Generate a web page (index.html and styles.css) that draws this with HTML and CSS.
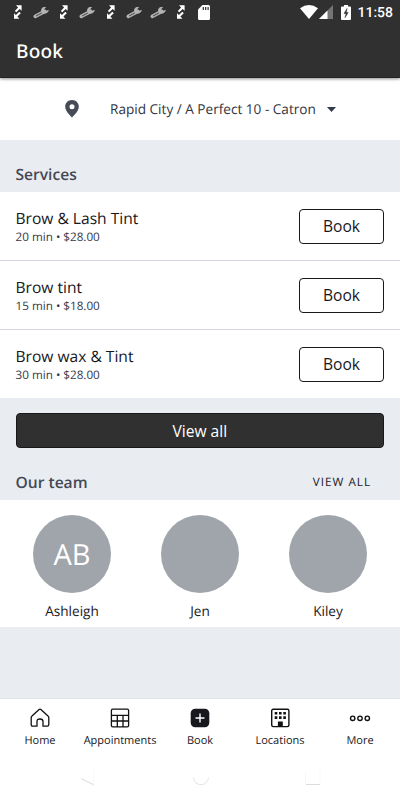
FILE: index.html
```html
<!DOCTYPE html>
<html lang="en">
<head>
<meta charset="utf-8">
<title>Book</title>
<link rel="stylesheet" href="styles.css">
</head>
<body>
<svg class="defs" width="0" height="0" aria-hidden="true">
  <symbol id="sync" viewBox="0 0 12 16">
    <path d="M4 1.2h5.6v5.6L7.700 4.900 4.300 8.300 2.800 6.900 6.100 3.400ZM2 14.800V9.200l1.900 1.900 3.400-3.400 1.500 1.500-3.400 3.400 2 2.200Z" fill="#fff"/>
  </symbol>
  <symbol id="wrench" viewBox="0 0 17 13">
    <path d="M2.300 10.400 11.700 5.300" stroke="#b3b3b3" stroke-width="3.600" stroke-linecap="round"/>
    <path d="M13.200 1 10.600.9C8.500 1.700 7.500 3.600 8.300 5.500c.9 2.100 3.200 2.700 5.100 1.700 1.500-.7 2.400-1.900 2.300-3.400l-2.800 1.100-1.700-1.600Z" fill="#b3b3b3"/>
    <path d="m3 10 5.800-3" stroke="#444" stroke-width="1"/>
  </symbol>
</svg>
<header class="appbar">
  <div class="status">
    <div class="notices">
      <svg class="sync"><use href="#sync"/></svg>
      <svg class="wrench"><use href="#wrench"/></svg>
      <svg class="sync"><use href="#sync"/></svg>
      <svg class="wrench"><use href="#wrench"/></svg>
      <svg class="sync"><use href="#sync"/></svg>
      <svg class="wrench"><use href="#wrench"/></svg>
      <svg class="wrench"><use href="#wrench"/></svg>
      <svg class="sync"><use href="#sync"/></svg>
      <svg class="sd" viewBox="0 0 12 15"><path d="M4.500 0H10.500Q12 0 12 1.500v12Q12 15 10.500 15h-9Q0 15 0 13.500v-9Z" fill="#fff"/><path d="M5.300 2v3M7.700 2v3M10.100 2v3" stroke="#303030" stroke-width="1.200"/></svg>
    </div>
    <div class="system">
      <svg class="wifi" viewBox="0 0 18 14"><path d="M0 3.200Q9-3 18 3.200L9 14Z" fill="#fff"/></svg>
      <svg class="signal" viewBox="0 0 14 14"><path d="M14 0V14H0Z" fill="#757575"/><path d="M8.500 5.500V14H0Z" fill="#fff"/></svg>
      <svg class="battery" viewBox="0 0 10 15"><path d="M3 0h4v1.500h2q1 0 1 1V14q0 1-1 1H1q-1 0-1-1V2.500q0-1 1-1h2Z" fill="#fff"/><path d="M6 3.500 3 8.600h2.100L4 12.700 7.200 7.400H5.300Z" fill="#303030" stroke="#303030" stroke-width=".5"/></svg>
      <span class="time">11:58</span>
    </div>
  </div>
  <h1>Book</h1>
</header>
<main>
  <div class="location">
    <svg class="pin" viewBox="0 0 14 18"><path fill-rule="evenodd" d="M7 0C3 0 .2 2.900.2 6.700.2 11 4.500 14.500 7 17.600 9.500 14.500 13.800 11 13.800 6.700 13.800 2.900 11 0 7 0Zm0 4.200a2.500 2.500 0 1 1 0 5 2.500 2.500 0 0 1 0-5Z" fill="#474b57"/></svg>
    <span class="place">Rapid City / A Perfect 10 - Catron</span>
    <svg class="caret" viewBox="0 0 9 5"><path d="M0 0h9L4.500 5Z" fill="#303b4c"/></svg>
  </div>
  <h2 class="services-title">Services</h2>
  <ul class="services">
    <li><div class="info"><div class="name">Brow &amp; Lash Tint</div><div class="meta">20 min • $28.00</div></div><button>Book</button></li>
    <li><div class="info"><div class="name">Brow tint</div><div class="meta">15 min • $18.00</div></div><button>Book</button></li>
    <li><div class="info"><div class="name">Brow wax &amp; Tint</div><div class="meta">30 min • $28.00</div></div><button>Book</button></li>
  </ul>
  <button class="all">View all</button>
  <div class="team-head"><h2>Our team</h2><a>VIEW ALL</a></div>
  <div class="team">
    <div class="member"><div class="avatar">AB</div><span>Ashleigh</span></div>
    <div class="member"><div class="avatar"></div><span>Jen</span></div>
    <div class="member"><div class="avatar"></div><span>Kiley</span></div>
  </div>
</main>
<nav>
  <a><svg viewBox="0 0 20 20"><path d="M7 18.200H2.800Q1.200 18.200 1.200 16.600V9.700Q1.200 8.700 2 8L8.800 1.700Q10 .7 11.200 1.700L18 8q.8.7.8 1.700v6.900q0 1.600-1.600 1.600H13v-4.700q0-2.500-3-2.500t-3 2.500Z" fill="none" stroke="#111" stroke-width="1.300" stroke-linejoin="round"/></svg><span>Home</span></a>
  <a><svg viewBox="0 0 20 20"><path d="M2.800 1.200h14.400q1.400 0 1.400 1.400v14.800q0 1.400-1.400 1.400H2.800q-1.400 0-1.400-1.400V2.600q0-1.400 1.400-1.400ZM1.400 7.300h17.200M1.400 13h17.200M7.300 7.300v11.500M13 7.300v11.500" fill="none" stroke="#111" stroke-width="1.300"/></svg><span>Appointments</span></a>
  <a><svg viewBox="0 0 20 20"><rect x=".7" y=".7" width="18.600" height="18.600" rx="4.500" fill="#17181d"/><path d="M5.500 10h9M10 5.500v9" stroke="#fff" stroke-width="1.400"/></svg><span>Book</span></a>
  <a><svg viewBox="0 0 20 20"><rect x="1.700" y="1.200" width="17.200" height="17.400" rx="1.500" fill="none" stroke="#111" stroke-width="1.400"/><path d="M4.700 4h2.600v2.600H4.700ZM9 4h2.600v2.600H9ZM13.300 4h2.600v2.600h-2.600ZM4.700 8.300h2.600v2.600H4.700ZM9 8.300h2.600v2.600H9ZM13.300 8.300h2.600v2.600h-2.600ZM7.900 13.500h4.900v5.300H7.900Z" fill="#111"/></svg><span>Locations</span></a>
  <a><svg class="dots" viewBox="0 0 22 20"><g fill="none" stroke="#111" stroke-width="1.400"><circle cx="3.700" cy="10.300" r="2.200"/><circle cx="11" cy="10.300" r="2.200"/><circle cx="18.300" cy="10.300" r="2.200"/></g></svg><span>More</span></a>
</nav>
<footer class="keys">
  <svg viewBox="0 0 16 16"><path d="M1 8.500 13.500 14.700V0" fill="none" stroke="#f8f8f8"/><path d="m1 8.500 12.500 6.200" stroke="#dcdcdc"/></svg>
  <svg viewBox="0 0 16 16"><path d="M.5 7.500q1.200 7 7.500 7.200 6.300-.2 7.500-7.200" fill="none" stroke="#e4e4e4"/></svg>
  <svg viewBox="0 0 16 16"><path d="M.5 1v13.500M15 1v13.500" stroke="#f7f7f7"/><path d="M1 14.500h14" stroke="#dcdcdc"/></svg>
</footer>
</body>
</html>
```

FILE: styles.css
```css
* { box-sizing: border-box; margin: 0; padding: 0; }
body { width: 400px; height: 800px; overflow: hidden; display: flex; flex-direction: column; background: #fff; font-family: "Open Sans", sans-serif; color: #17181c; text-rendering: geometricPrecision; }
svg { display: block; flex: none; }
.defs { position: absolute; }
.appbar { height: 78px; flex: none; background: #303030; border-bottom: 1px solid #242424; box-shadow: 0 1px 3px rgba(0,0,0,.45); z-index: 1; color: #fff; }
.status { height: 24px; display: flex; justify-content: space-between; padding: 0 7px 0 6px; }
.notices { display: grid; grid-template-columns: repeat(9, 23.4px); align-items: center; justify-items: center; }
.sync { width: 12px; height: 16px; }
.wrench { width: 17px; height: 13px; }
.sd { width: 12px; height: 15px; margin-right: 2px; }
.system { display: flex; align-items: center; }
.wifi { width: 18px; height: 14px; margin-right: 1px; }
.signal { width: 14px; height: 14px; margin-right: 8px; }
.battery { width: 10px; height: 15px; margin-right: 6px; }
.time { font: 500 14px/24px Roboto, sans-serif; padding-top: 1px; }
h1 { font: 500 19px/26px "Noto Sans", sans-serif; padding: 14px 16px 0; letter-spacing: .2px; }
.location { height: 62px; display: flex; align-items: center; padding-left: 65px; }
.pin { width: 14px; height: 18px; }
.place { width: 207px; margin: 0 10px 0 31px; padding-bottom: 2px; font-size: 13.600px; color: #303440; white-space: nowrap; }
.caret { width: 9px; height: 5px; }
main { flex: none; height: 620px; background: #e9ecf1; }
.location, .services, .team { background: #fff; }
h2 { font-size: 15.600px; line-height: 22px; font-weight: 600; color: #444854; }
.services-title { height: 52px; padding: 23px 15.500px 0; }
.services { list-style: none; height: 206px; display: grid; grid-template-rows: 69px 69px 68px; }
.services li { display: flex; align-items: center; justify-content: space-between; padding: 0 16px 0 15.500px; border-bottom: 1px solid #d5d8df; }
.services li:last-child { border: 0; }
.info { padding-top: 2px; }
.name { font-size: 15.600px; line-height: 20px; }
.meta { font-size: 11.700px; line-height: 18px; color: #343846; }
button { font: 15.600px/20px "Open Sans", sans-serif; width: 85px; height: 35px; background: #fff; border: 1px solid #17181c; border-radius: 4px; color: #17181c; }
.all { display: block; width: 368.500px; margin: 15px 15.500px 0; background: #303030; border-color: #17181c; color: #fff; }
.team-head { display: flex; justify-content: space-between; height: 52px; padding: 23px 29px 0 15.500px; }
.team-head a { font-size: 11.700px; line-height: 22px; letter-spacing: 1px; }
.team { height: 127px; padding: 15px 8px 0; display: grid; grid-template-columns: repeat(3, 128px); }
.member { display: flex; flex-direction: column; align-items: center; font-size: 13.600px; line-height: 20px; }
.avatar { width: 78px; height: 78px; border-radius: 50%; background: #a0a4ab; color: #fff; font-size: 29px; line-height: 80px; text-align: center; margin-bottom: 8px; }
nav { height: 62px; flex: none; display: grid; grid-template-columns: repeat(5, 80px); border-top: 1px solid #e0e3e8; background: #fff; }
nav a { display: flex; flex-direction: column; align-items: center; font-size: 11px; line-height: 16px; padding-top: 9px; }
nav svg { width: 20px; height: 20px; margin-bottom: 5px; }
nav .dots { width: 22px; }
.keys { height: 40px; display: flex; justify-content: space-between; padding: 10px 79px 0 80px; }
.keys svg { width: 16px; height: 16px; }
```
